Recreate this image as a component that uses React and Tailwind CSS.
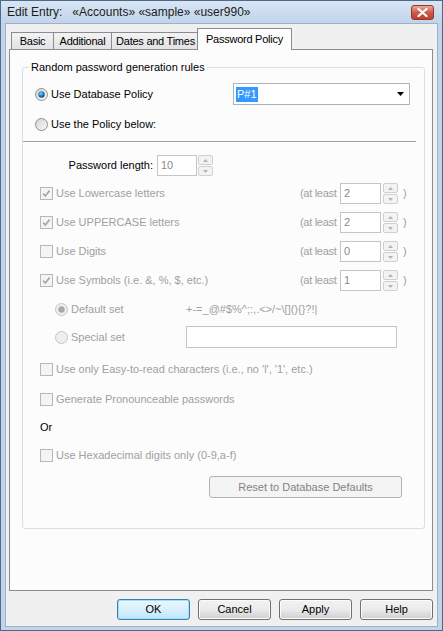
import React from "react";

const gray = "text-[#a0a0a0]";

function Radio({ checked, disabled }) {
  return (
    <svg width="13" height="13" viewBox="0 0 13 13" className="shrink-0">
      <defs>
        <linearGradient id="rbg" x1="0" y1="0" x2="1" y2="1">
          <stop offset="0" stopColor="#d2d2d2" />
          <stop offset="1" stopColor="#fbfbfb" />
        </linearGradient>
        <radialGradient id="rdot" cx="0.4" cy="0.35" r="0.7">
          <stop offset="0" stopColor="#7fd0ff" />
          <stop offset="0.5" stopColor="#2c83c6" />
          <stop offset="1" stopColor="#0f3f6e" />
        </radialGradient>
      </defs>
      <circle
        cx="6.5"
        cy="6.5"
        r="6"
        fill={disabled ? "#efefef" : "url(#rbg)"}
        stroke={disabled ? "#c4c4c4" : "#8e8f8f"}
      />
      {checked && (
        <circle cx="6.5" cy="6.5" r="3.2" fill={disabled ? "#a8a8a8" : "url(#rdot)"} />
      )}
    </svg>
  );
}

function Check({ checked }) {
  return (
    <div className="w-[13px] h-[13px] shrink-0 border border-[#b8b8b8] bg-[#f4f4f4] flex items-center justify-center">
      {checked && (
        <svg width="11" height="11" viewBox="0 0 11 11">
          <path d="M2.2 5.6 L4.3 8 L8.6 2.6" fill="none" stroke="#a8a8a8" strokeWidth="1.7" />
        </svg>
      )}
    </div>
  );
}

function Spin() {
  return (
    <div className="flex flex-col w-[15px] h-[21px] gap-px shrink-0">
      <div className="flex-1 border border-[#d0d0d0] bg-[#f3f3f3] rounded-[2px] flex items-center justify-center">
        <svg width="5" height="3" viewBox="0 0 5 3">
          <path d="M0 3 L2.5 0 L5 3Z" fill="#b4b4b4" />
        </svg>
      </div>
      <div className="flex-1 border border-[#d0d0d0] bg-[#f3f3f3] rounded-[2px] flex items-center justify-center">
        <svg width="5" height="3" viewBox="0 0 5 3">
          <path d="M0 0 L2.5 3 L5 0Z" fill="#b4b4b4" />
        </svg>
      </div>
    </div>
  );
}

function NumBox({ value, width }) {
  return (
    <div
      className={`${width} h-[21px] shrink-0 border border-[#c2c6cb] bg-white flex items-center pl-[3px] text-[#8a8a8a]`}
    >
      {value}
    </div>
  );
}

function CheckRow({ label, checked, min, mt }) {
  return (
    <div className={`flex items-center h-[21px] ${mt}`}>
      <div className="w-[277px] flex items-center pl-[17px] gap-[3px]">
        <Check checked={checked} />
        <span className={`${gray} whitespace-nowrap`}>{label}</span>
      </div>
      {min !== undefined && (
        <>
          <span className={`w-[40px] ${gray} whitespace-nowrap tracking-[-0.3px]`}>(at least</span>
          <NumBox value={min} width="w-[41px]" />
          <div className="ml-[2px]">
            <Spin />
          </div>
          <span className={`ml-[5px] ${gray}`}>)</span>
        </>
      )}
    </div>
  );
}

function Button({ children, primary }) {
  return (
    <div
      className={`w-[73px] h-[21px] rounded-[3px] border flex items-center justify-center text-black ${
        primary
          ? "border-[#3c7fb1] bg-gradient-to-b from-[#eaf6fd] via-[#d9f0fc] to-[#bee6fd] shadow-[inset_0_0_0_1px_#9ee1f7]"
          : "border-[#707070] bg-gradient-to-b from-[#f2f2f2] via-[#ebebeb] to-[#cfcfcf] shadow-[inset_0_0_0_1px_#fcfcfc]"
      }`}
    >
      {children}
    </div>
  );
}

export default function App() {
  return (
    <div className="w-[443px] h-[631px] flex flex-col border border-[#4d6a8c] bg-[#c1d4ea] text-[11px] leading-[13px] font-['Liberation_Sans',Arial,sans-serif] text-black">
      {/* title bar */}
      <div className="h-[22px] flex items-center pl-[6px] bg-gradient-to-b from-[#d8e5f3] to-[#c1d4ea]">
        <span className="text-[12px] text-[#1c1c1c] whitespace-pre">
          Edit Entry:   «Accounts» «sample» «user990»
        </span>
        <div className="ml-auto mr-[8px] w-[23px] h-[15px] rounded-[3px] border border-[#8c3a2c] bg-gradient-to-b from-[#e9a99a] via-[#cf5a45] to-[#c0402b] flex items-center justify-center">
          <svg width="11" height="9" viewBox="0 0 11 9">
            <path d="M1.5 1 L9.5 8 M9.5 1 L1.5 8" stroke="#fff" strokeWidth="2.2" strokeLinecap="round" />
          </svg>
        </div>
      </div>

      {/* client */}
      <div className="mx-[4px] mb-[3px] h-[604px] border border-[#9fb1c7] bg-[#f0f0f0] flex flex-col">
        <div className="pt-[4px] pl-[3px]">
          {/* tabs */}
          <div className="h-[21px] flex items-end pl-[2px] tracking-[-0.25px]">
            <div className="h-[17px] w-[43px] border border-b-0 border-[#898c95] bg-gradient-to-b from-[#f3f3f3] to-[#e2e2e2] flex items-center justify-center">
              Basic
            </div>
            <div className="h-[17px] w-[59px] -ml-px border border-b-0 border-[#898c95] bg-gradient-to-b from-[#f3f3f3] to-[#e2e2e2] flex items-center justify-center">
              Additional
            </div>
            <div className="h-[17px] w-[89px] -ml-px border border-b-0 border-[#898c95] bg-gradient-to-b from-[#f3f3f3] to-[#e2e2e2] flex items-center justify-center">
              Dates and Times
            </div>
            <div className="relative z-10 h-[22px] w-[95px] -ml-[3px] -mb-px border border-b-0 border-[#898c95] bg-[#fcfcfc] flex items-start justify-center pt-[4px]">
              Password Policy
            </div>
          </div>

          {/* panel */}
          <div className="w-[424px] h-[542px] border border-[#898c95] bg-[#fcfcfc]">
            <div className="relative ml-[12px] mt-[17px] w-[403px] border border-[#d5dfe5] rounded-[3px] pb-[30px]">
              <span className="absolute left-[6px] -top-[7px] px-[2px] bg-[#fcfcfc] whitespace-nowrap">
                Random password generation rules
              </span>

              <div className="mt-[15px] h-[22px] flex items-center pl-[12px] pr-[14px]">
                <Radio checked />
                <span className="ml-[3px]">Use Database Policy</span>
                <div className="ml-auto w-[177px] h-[22px] border border-[#abb5c1] bg-white flex items-center pl-[2px]">
                  <span className="bg-[#3399ff] text-white px-px leading-[15px]">P#1</span>
                  <svg className="ml-auto mr-[5px]" width="7" height="4" viewBox="0 0 7 4">
                    <path d="M0 0 L7 0 L3.5 4Z" fill="#000" />
                  </svg>
                </div>
              </div>

              <div className="mt-[8px] h-[22px] flex items-center pl-[12px]">
                <Radio />
                <span className="ml-[3px]">Use the Policy below:</span>
              </div>

              <div className="mt-[6px] mr-[8px] h-[2px] border-t border-[#a0a0a0] border-b border-b-white" />

              <div className="mt-[12px] h-[21px] flex items-center">
                <span className="w-[130px] text-right whitespace-nowrap">Password length:</span>
                <div className="ml-[4px]">
                  <NumBox value="10" width="w-[40px]" />
                </div>
                <div className="ml-px">
                  <Spin />
                </div>
              </div>

              <CheckRow mt="mt-[7px]" label="Use Lowercase letters" checked min="2" />
              <CheckRow mt="mt-[8px]" label="Use UPPERCASE letters" checked min="2" />
              <CheckRow mt="mt-[8px]" label="Use Digits" min="0" />
              <CheckRow mt="mt-[8px]" label="Use Symbols (i.e. &, %, $, etc.)" checked min="1" />

              <div className="mt-[8px] h-[21px] flex items-center">
                <div className="w-[163px] flex items-center pl-[32px] gap-[3px]">
                  <Radio checked disabled />
                  <span className={gray}>Default set</span>
                </div>
                <span className={`${gray} whitespace-nowrap`}>
                  {"+-=_@#$%^;:,.<>/~\\[](){}?!|"}
                </span>
              </div>

              <div className="mt-[6px] h-[22px] flex items-center">
                <div className="w-[163px] flex items-center pl-[32px] gap-[3px]">
                  <Radio disabled />
                  <span className={gray}>Special set</span>
                </div>
                <div className="w-[211px] h-[22px] border border-[#c2c6cb] bg-white" />
              </div>

              <CheckRow mt="mt-[11px]" label="Use only Easy-to-read characters (i.e., no 'l', '1', etc.)" />
              <CheckRow mt="mt-[9px]" label="Generate Pronounceable passwords" />

              <div className="mt-[7px] h-[21px] flex items-center pl-[17px]">Or</div>

              <CheckRow mt="mt-[7px]" label="Use Hexadecimal digits only (0-9,a-f)" />

              <div className="mt-[10px] ml-[186px] w-[193px] h-[22px] rounded-[3px] border border-[#adb2b5] bg-[#f4f4f4] flex items-center justify-center text-[#838383]">
                Reset to Database Defaults
              </div>
            </div>
          </div>
        </div>

        {/* buttons */}
        <div className="mt-[8px] w-[427px] flex justify-end gap-[8px]">
          <Button primary>OK</Button>
          <Button>Cancel</Button>
          <Button>Apply</Button>
          <Button>Help</Button>
        </div>
      </div>
    </div>
  );
}
